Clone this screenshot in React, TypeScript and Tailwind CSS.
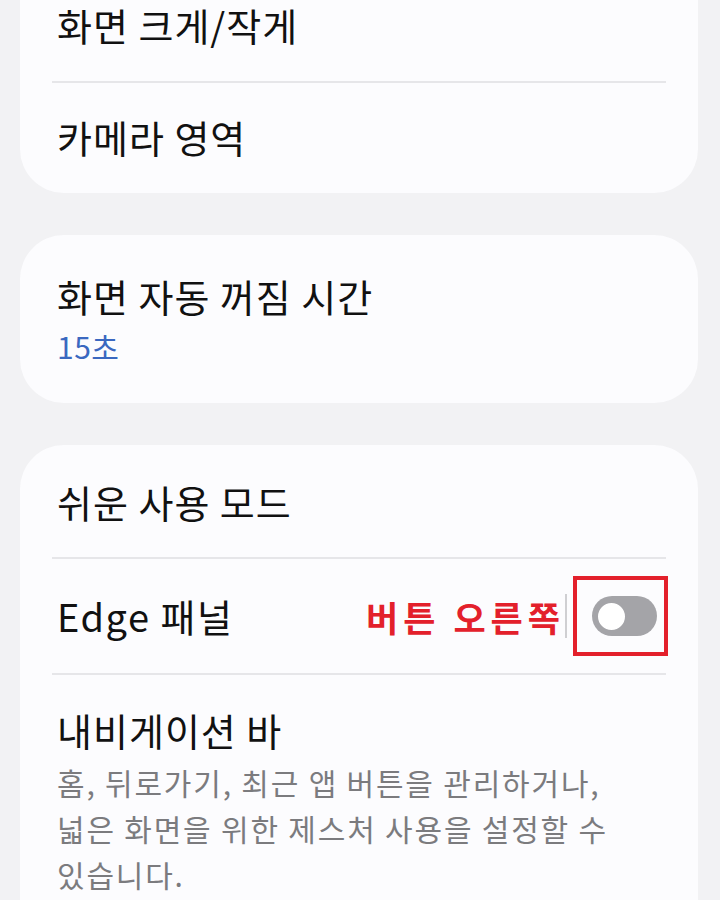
const font = { fontFamily: '"Noto Sans CJK KR", "Noto Sans", sans-serif' };

const Divider = () => <div className="mx-[32px] h-[2px] bg-[#e6e6e9]" />;

const Row = ({ title, className = "" }: { title: string; className?: string }) => (
  <div className={`flex items-center px-[37px] text-[38px] tracking-[1px] text-[#111111] ${className}`}>
    <span className="leading-none">{title}</span>
  </div>
);

export default function App() {
  return (
    <div
      className="min-h-[900px] w-[720px] overflow-hidden bg-[#f2f2f4] pl-[20px] pr-[22px]"
      style={font}
    >
      {/* card 1 - its top lies above the screen */}
      <div className="rounded-b-[44px] bg-[#fcfcfe]">
        <Row title="화면 크게/작게" className="h-[81px] pb-[31px]" />
        <Divider />
        <Row title="카메라 영역" className="h-[110px] pb-[2px]" />
      </div>

      {/* card 2 */}
      <div className="mt-[42px] flex h-[168px] flex-col justify-center rounded-[44px] bg-[#fcfcfe] px-[37px]">
        <div className="text-[38px] leading-none tracking-[1px] text-[#111111]">화면 자동 꺼짐 시간</div>
        <div className="mt-[16px] text-[30px] leading-none tracking-[0.5px] text-[#3a68c0]">15초</div>
      </div>

      {/* card 3 */}
      <div className="mt-[42px] rounded-t-[44px] bg-[#fcfcfe] pb-[40px]">
        <Row title="쉬운 사용 모드" className="h-[112px] pt-[2px]" />
        <Divider />
        <div className="flex h-[114px] items-center px-[37px]">
          <span className="text-[38px] leading-none tracking-[1.5px] text-[#111111]">Edge 패널</span>
          <span className="ml-auto text-[35px] font-bold leading-none tracking-[5px] text-[#e3202b]">
            버튼 오른쪽
          </span>
          <div className="ml-[0px] h-[44px] w-[2px] bg-[#cfcfd2]" />
          <div className="ml-[6px] mr-[-7px] flex h-[80px] w-[95px] items-center justify-center border-[4px] border-[#e3202b] pl-[8px]">
            <div className="flex h-[40px] w-[65px] items-center rounded-full bg-[#a4a4a8] px-[3px]">
              <div className="h-[33px] w-[33px] rounded-full border-[3px] border-[#a4a4a8] bg-white" />
            </div>
          </div>
        </div>
        <Divider />
        <div className="px-[37px] pt-[36px]">
          <div className="text-[38px] leading-none tracking-[1px] text-[#111111]">내비게이션 바</div>
          <div className="mt-[10px] text-[30px] leading-[46px] tracking-[1.8px] text-[#7b7b7e]">
            홈, 뒤로가기, 최근 앱 버튼을 관리하거나,
            <br />
            넓은 화면을 위한 제스처 사용을 설정할 수
            <br />
            있습니다.
          </div>
        </div>
      </div>
    </div>
  );
}
